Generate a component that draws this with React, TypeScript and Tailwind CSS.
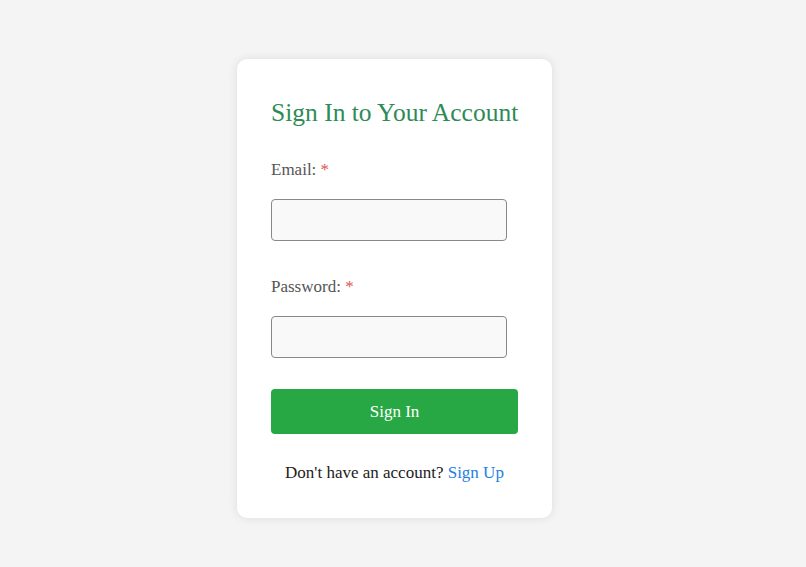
import { useState } from 'react';

export default function App() {
  const [email, setEmail] = useState('');
  const [password, setPassword] = useState('');

  return (
    <div className="min-h-screen bg-[#f4f4f4] flex justify-center items-start pt-[59px] pr-[17px] font-['Liberation_Serif','Times_New_Roman',serif]">
      <form
        className="w-[315px] bg-white rounded-[10px] shadow-[0_0_10px_rgba(0,0,0,0.1)] pt-[39px] pb-[35px] px-[34px]"
        onSubmit={(e) => e.preventDefault()}
      >
        <h2 className="whitespace-nowrap text-[25.5px] leading-[30px] text-[#2e8b57]">Sign In to Your Account</h2>

        <label className="block mt-[32px] text-[17px] leading-[20px] text-[#555]">
          Email: <span className="text-[#e05555]">*</span>
        </label>
        <input
          type="email"
          value={email}
          onChange={(e) => setEmail(e.target.value)}
          className="block mt-[19px] w-[236px] h-[42px] rounded-[4px] border border-[#888] bg-[#f9f9f9] px-[10px] text-[17px] outline-none"
        />

        <label className="block mt-[36px] text-[17px] leading-[20px] text-[#555]">
          Password: <span className="text-[#e05555]">*</span>
        </label>
        <input
          type="password"
          value={password}
          onChange={(e) => setPassword(e.target.value)}
          className="block mt-[19px] w-[236px] h-[42px] rounded-[4px] border border-[#888] bg-[#f9f9f9] px-[10px] text-[17px] outline-none"
        />

        <button
          type="submit"
          className="block mt-[31px] w-full h-[45px] rounded-[4px] bg-[#28a745] text-white text-[17px] cursor-pointer"
        >
          Sign In
        </button>

        <p className="mt-[29px] text-center text-[17px] leading-[20px] text-[#222]">
          Don't have an account? <a href="#" className="text-[#1e7fe0]">Sign Up</a>
        </p>
      </form>
    </div>
  );
}
